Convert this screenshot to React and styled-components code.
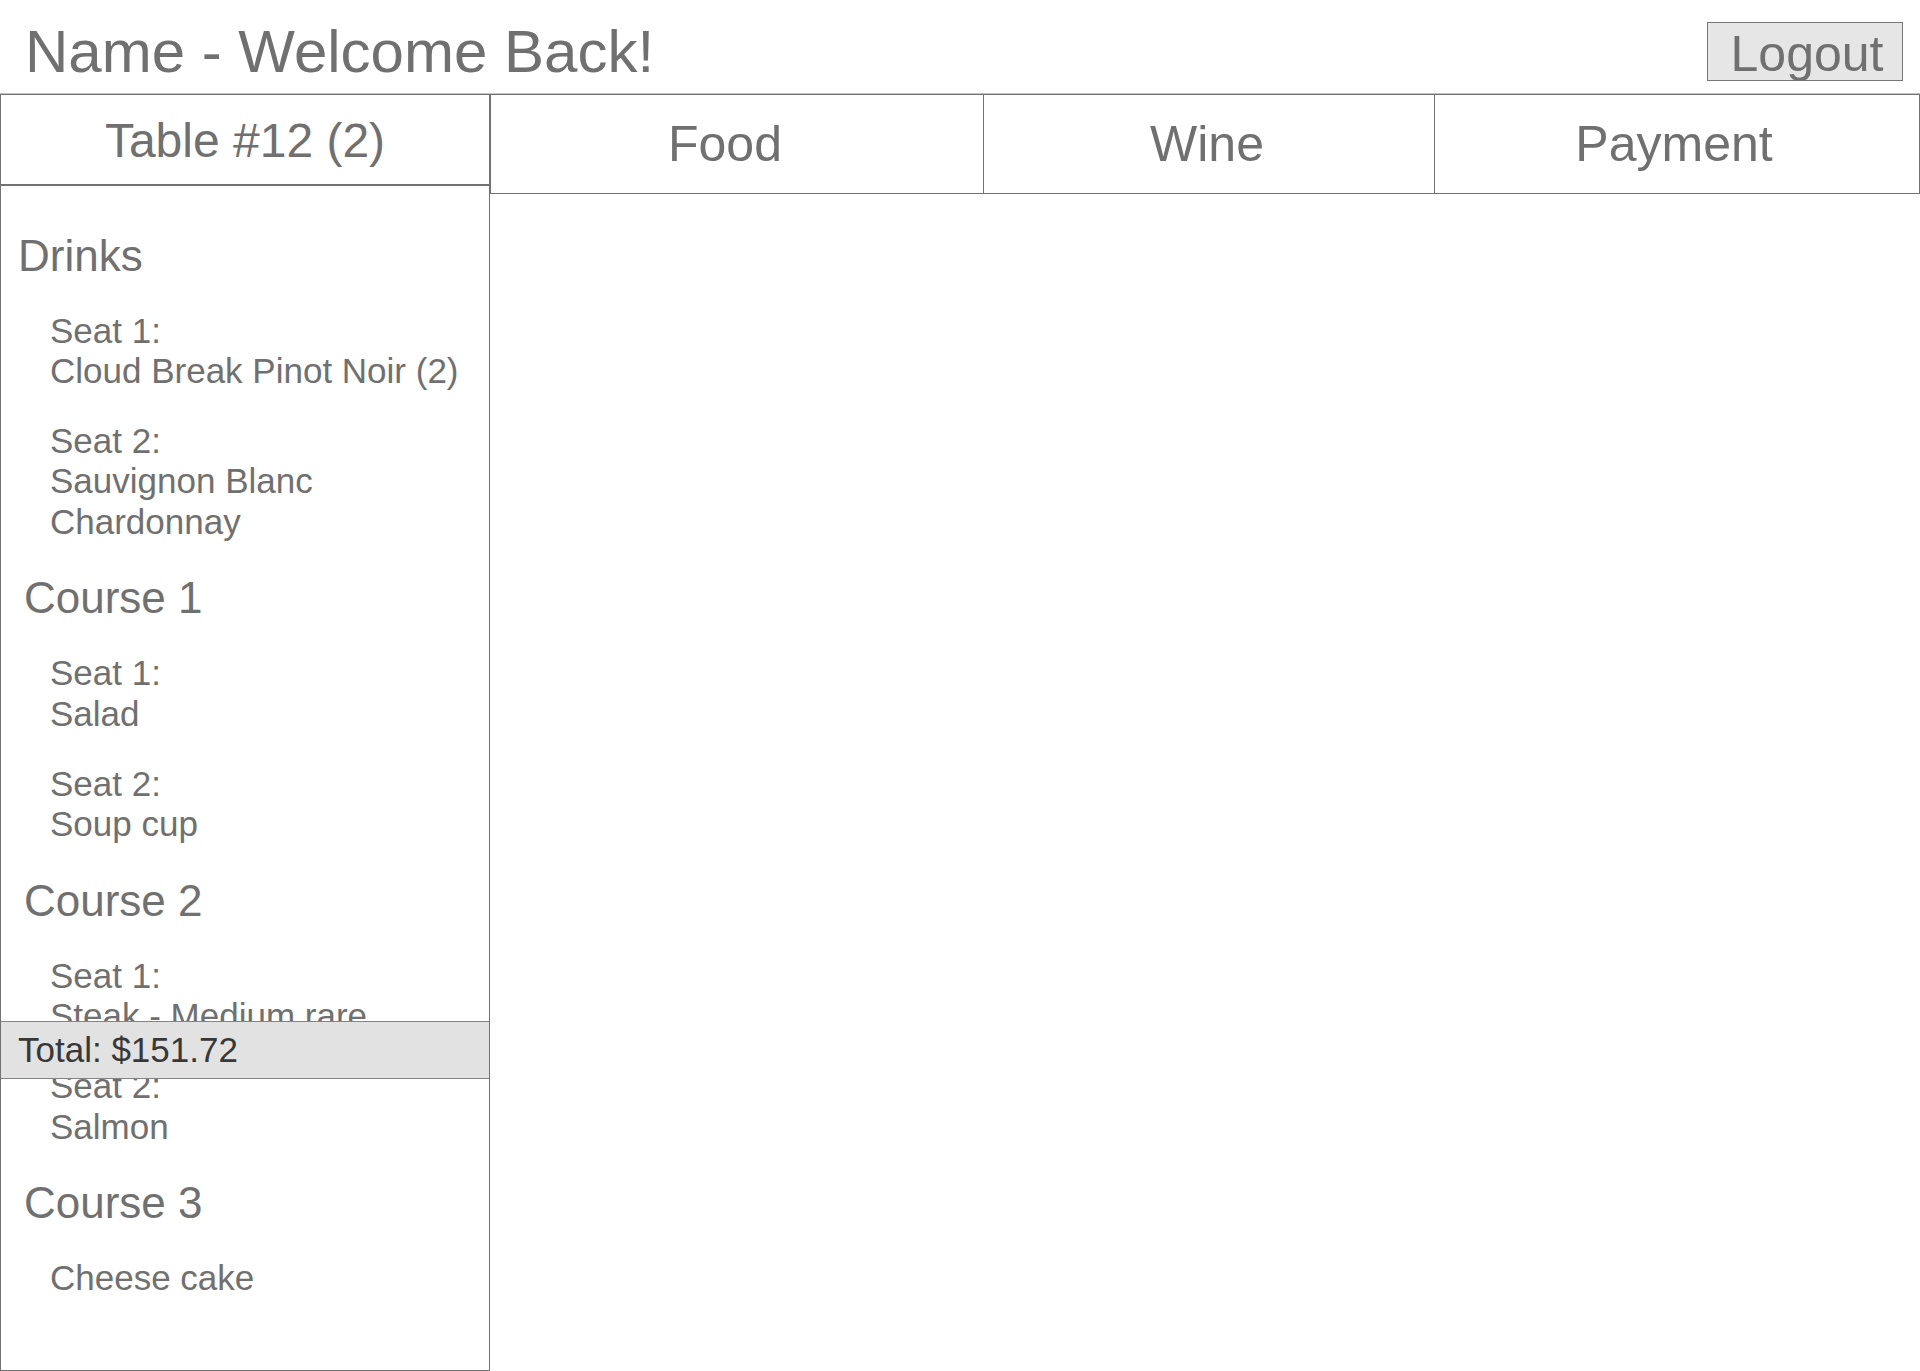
import styled, { createGlobalStyle } from "styled-components";

const GlobalStyle = createGlobalStyle`
    html, body {
        margin: 0;
        padding: 0;
        background: #ffffff;
    }

    body {
        font-family: "Liberation Sans", Helvetica, Arial, sans-serif;
        color: #6f6f6f;
    }
`;

// Page shell
const Page = styled.div`
    display: flex;
    flex-direction: column;
    height: 100vh;
    overflow: hidden;
`;

// Top bar
const Header = styled.header`
    box-sizing: border-box;
    height: 94px;
    padding: 22px 17px 0 25px;

    display: flex;
    justify-content: space-between;
    align-items: flex-start;

    border-bottom: 1px solid #c4c4c4;
`;

const Title = styled.h1`
    margin: 0;
    font-size: 60px;
    font-weight: 400;
    line-height: 60px;
    color: #707070;
`;

const LogoutButton = styled.button`
    box-sizing: border-box;
    width: 196px;
    height: 59px;
    padding: 4px 0 0 4px;

    font-family: inherit;
    font-size: 50px;
    line-height: 52px;
    color: #707070;

    background: #e6e6e6;
    border: 1px solid #767676;
    border-radius: 0;
    cursor: pointer;
`;

const Main = styled.div`
    flex: 1;
    min-height: 0;
    display: flex;
`;

// Left order panel
const OrderPanel = styled.aside`
    position: relative;
    box-sizing: border-box;
    width: 490px;
    flex-shrink: 0;

    display: flex;
    flex-direction: column;

    border: 1px solid #727272;
    overflow: hidden;
`;

const TableHead = styled.div`
    box-sizing: border-box;
    height: 91px;
    flex-shrink: 0;

    text-align: center;
    font-size: 48px;
    line-height: 91px;
    color: #707070;

    border-bottom: 2px solid #727272;
`;

const OrderList = styled.div`
    display: flex;
    flex-direction: column;
    gap: 29px;
    padding-top: 42.5px;
`;

const SectionTitle = styled.div`
    padding-left: ${(p) => p.$indent}px;
    font-size: 44px;
    line-height: 53px;
    color: #707070;
`;

const SeatBlock = styled.div`
    padding-left: 49px;
    font-size: 35px;
    line-height: 40.6px;
    color: #707070;
`;

const TotalBar = styled.div`
    position: absolute;
    top: 926px;
    left: -1px;
    right: -1px;

    box-sizing: border-box;
    height: 58px;
    padding-left: 17px;

    font-size: 35px;
    line-height: 56px;
    color: #383838;

    background: #e2e2e2;
    border: 1px solid #848484;
`;

// Right side
const Workspace = styled.section`
    flex: 1;
    min-width: 0;
`;

const TabRow = styled.nav`
    box-sizing: border-box;
    height: 100px;

    display: grid;
    grid-template-columns: 493px 451px 1fr;

    border-top: 1px solid #727272;
    border-bottom: 1px solid #727272;
    border-right: 1px solid #727272;
`;

const Tab = styled.div`
    padding-right: ${(p) => p.$nudge || 0}px;
    text-align: center;
    font-size: 50px;
    line-height: 98px;
    color: #707070;

    border-left: 1px solid #727272;
    cursor: pointer;
`;

const orders = [
    {
        title: "Drinks",
        indent: 17,
        seats: [
            ["Seat 1:", "Cloud Break Pinot Noir (2)"],
            ["Seat 2:", "Sauvignon Blanc", "Chardonnay"],
        ],
    },
    {
        title: "Course 1",
        indent: 23,
        seats: [
            ["Seat 1:", "Salad"],
            ["Seat 2:", "Soup cup"],
        ],
    },
    {
        title: "Course 2",
        indent: 23,
        seats: [
            ["Seat 1:", "Steak - Medium rare"],
            ["Seat 2:", "Salmon"],
        ],
    },
    {
        title: "Course 3",
        indent: 23,
        seats: [["Cheese cake"]],
    },
];

const App = () => {
    return (
        <>
            <GlobalStyle />
            <Page>
                <Header>
                    <Title>Name - Welcome Back!</Title>
                    <LogoutButton>Logout</LogoutButton>
                </Header>
                <Main>
                    <OrderPanel>
                        <TableHead>Table #12 (2)</TableHead>
                        <OrderList>
                            {orders.map((section) => [
                                <SectionTitle key={section.title} $indent={section.indent}>
                                    {section.title}
                                </SectionTitle>,
                                ...section.seats.map((lines, i) => (
                                    <SeatBlock key={section.title + i}>
                                        {lines.map((line) => (
                                            <div key={line}>{line}</div>
                                        ))}
                                    </SeatBlock>
                                )),
                            ])}
                        </OrderList>
                        <TotalBar>Total: $151.72</TotalBar>
                    </OrderPanel>
                    <Workspace>
                        <TabRow>
                            <Tab $nudge={24}>Food</Tab>
                            <Tab $nudge={4}>Wine</Tab>
                            <Tab $nudge={6}>Payment</Tab>
                        </TabRow>
                    </Workspace>
                </Main>
            </Page>
        </>
    );
};

export default App;
